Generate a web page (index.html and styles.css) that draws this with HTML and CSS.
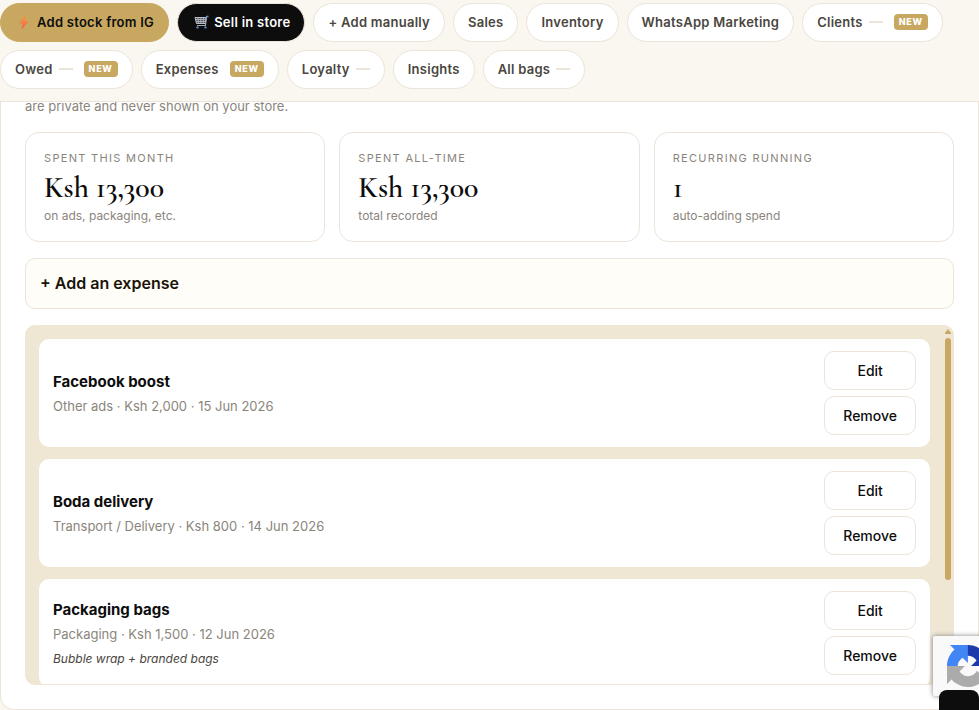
FILE: index.html
```html
<!DOCTYPE html>
<html lang="en">
<head>
  <meta charset="UTF-8" />
  <meta name="viewport" content="width=device-width, initial-scale=1" />
  <title>Expenses</title>
  <link rel="stylesheet" href="styles.css">
</head>
<body>
  <nav class="tabs">
    <button class="tab tab-gold" type="button">
      <svg class="tab-icon" viewBox="0 0 18 18" aria-hidden="true">
        <defs>
          <linearGradient id="bolt" x1="0" y1="0" x2="0" y2="1">
            <stop offset="0" stop-color="#f9983c"/>
            <stop offset="1" stop-color="#f4604f"/>
          </linearGradient>
        </defs>
        <path d="M11 3 5 10h3.500L7 15.500l6-7H9.500z" fill="url(#bolt)" stroke="url(#bolt)" stroke-width="1" stroke-linejoin="round"/>
      </svg>
      Add stock from IG
    </button>
    <button class="tab tab-dark" type="button">
      <svg class="tab-icon" viewBox="0 0 18 18" aria-hidden="true" fill="none">
        <path d="M3 4.500h11l-.6 6H4.500z" fill="#4b4f55" stroke="#b9bec6"/>
        <path d="M6 4.500l.5 6M8.800 4.500v6M11.500 4.500l-.3 6M3.500 6.500h10.300M4 8.500h9.600" stroke="#b9bec6" stroke-width=".8"/>
        <path d="M16 3.500h-1.400L13.400 12.500H5" stroke="#a3a9b2" stroke-width="1.200"/>
        <path d="M14.300 3.500h2.200" stroke="#4f8fe0" stroke-width="1.600"/>
        <circle cx="5.500" cy="14.400" r="1.200" fill="#5f82b8"/>
        <circle cx="13.500" cy="14.400" r="1.200" fill="#5f82b8"/>
      </svg>
      Sell in store
    </button>
    <button class="tab" type="button">+ Add manually</button>
    <button class="tab" type="button">Sales</button>
    <button class="tab" type="button">Inventory</button>
    <button class="tab" type="button">WhatsApp Marketing</button>
    <button class="tab" type="button">Clients <span class="dash"></span><span class="new">NEW</span></button>
    <button class="tab" type="button">Owed <span class="dash"></span><span class="new">NEW</span></button>
    <button class="tab" type="button">Expenses <span class="new">NEW</span></button>
    <button class="tab" type="button">Loyalty <span class="dash"></span></button>
    <button class="tab" type="button">Insights</button>
    <button class="tab" type="button">All bags <span class="dash"></span></button>
  </nav>

  <main class="panel">
    <p class="intro">are private and never shown on your store.</p>

    <section class="stats">
      <div class="stat">
        <div class="stat-label">Spent this month</div>
        <div class="stat-value">Ksh 13,300</div>
        <div class="stat-note">on ads, packaging, etc.</div>
      </div>
      <div class="stat">
        <div class="stat-label">Spent all-time</div>
        <div class="stat-value">Ksh 13,300</div>
        <div class="stat-note">total recorded</div>
      </div>
      <div class="stat">
        <div class="stat-label">Recurring running</div>
        <div class="stat-value">1</div>
        <div class="stat-note">auto-adding spend</div>
      </div>
    </section>

    <button class="add" type="button">+ Add an expense</button>

    <section class="list">
      <div class="items">
        <article class="item">
          <div class="item-text">
            <div class="item-title">Facebook boost</div>
            <div class="item-meta">Other ads · Ksh 2,000 · 15 Jun 2026</div>
          </div>
          <div class="item-actions">
            <button class="btn" type="button">Edit</button>
            <button class="btn" type="button">Remove</button>
          </div>
        </article>
        <article class="item">
          <div class="item-text">
            <div class="item-title">Boda delivery</div>
            <div class="item-meta">Transport / Delivery · Ksh 800 · 14 Jun 2026</div>
          </div>
          <div class="item-actions">
            <button class="btn" type="button">Edit</button>
            <button class="btn" type="button">Remove</button>
          </div>
        </article>
        <article class="item">
          <div class="item-text">
            <div class="item-title">Packaging bags</div>
            <div class="item-meta">Packaging · Ksh 1,500 · 12 Jun 2026</div>
            <div class="item-note">Bubble wrap + branded bags</div>
          </div>
          <div class="item-actions">
            <button class="btn" type="button">Edit</button>
            <button class="btn" type="button">Remove</button>
          </div>
        </article>
      </div>
      <div class="scrollbar" aria-hidden="true">
        <svg class="scroll-arrow" viewBox="0 0 6 5"><path d="M3 0 6 4v1H0V4z"/></svg>
        <div class="scroll-thumb"></div>
      </div>
    </section>
  </main>

  <div class="captcha">
    <svg class="captcha-logo" viewBox="0 0 64 64" aria-hidden="true">
      <path fill="#1c3aa9" d="M64 31.955l-.033-1.370V4.687l-7.160 7.160C50.948 4.674 42.033.093 32.050.093c-10.400 0-19.622 4.960-25.458 12.640l11.736 11.860a15.550 15.550 0 0 1 4.754-5.334c2.050-1.600 4.952-2.906 8.968-2.906.485 0 .860.057 1.135.163 4.976.393 9.288 3.140 11.828 7.124l-8.307 8.307L64 31.953"/>
      <path fill="#4285f4" d="M31.862.094l-1.370.033H4.594l7.160 7.160C4.580 13.147 0 22.060 0 32.046c0 10.400 4.960 19.622 12.640 25.458L24.500 45.768a15.550 15.550 0 0 1-5.334-4.754c-1.600-2.050-2.906-4.952-2.906-8.968 0-.485.057-.860.163-1.135.393-4.976 3.140-9.288 7.124-11.828l8.307 8.307L31.860.095"/>
      <path fill="#ababab" d="M.001 32.045l.033 1.370v25.898l7.160-7.160c5.860 7.173 14.774 11.754 24.760 11.754 10.400 0 19.622-4.960 25.458-12.640l-11.736-11.860a15.550 15.550 0 0 1-4.754 5.334c-2.050 1.600-4.952 2.906-8.968 2.906-.485 0-.860-.057-1.135-.163-4.976-.393-9.288-3.140-11.828-7.124l8.307-8.307c-10.522.040-22.400.066-27.295-.005"/>
    </svg>
  </div>
  <button class="float" type="button" aria-label="Open"></button>
</body>
</html>
```
FILE: styles.css
```css
* {
  box-sizing: border-box;
}
body {
  margin: 0;
  background: #faf6f0;
  font-family: Inter, sans-serif;
  font-size: 13px;
  color: #0d0d0d;
  overflow: hidden;
}
button {
  font-family: inherit;
  cursor: pointer;
}
.tabs {
  position: relative;
  z-index: 1;
  display: flex;
  flex-wrap: wrap;
  gap: 8px;
  padding: 3px 0 12px;
  background: #faf6f0;
  border-bottom: 1px solid #ece4d8;
}
.tab {
  display: flex;
  align-items: center;
  height: 39px;
  padding: 0 14px 2px;
  border: 1px solid #ece4d8;
  border-radius: 20px;
  background: #fff;
  color: #4a4640;
  font-size: 13px;
  font-weight: 600;
  letter-spacing: 0.02em;
}
.tab-gold {
  background: #c8a860;
  border-color: #c8a860;
  color: #0d0d0d;
}
.tab-dark {
  background: #0d0d0d;
  color: #fff;
}
.tab-icon {
  width: 18px;
  height: 18px;
  margin-right: 4px;
}
.dash {
  width: 14px;
  height: 2px;
  margin-left: 6px;
  background: #ece4d8;
}
.new {
  margin-left: 11px;
  padding: 0 5px;
  border-radius: 4px;
  background: #c8a860;
  color: #fff;
  font-size: 9px;
  font-weight: 800;
  line-height: 16px;
  letter-spacing: 0.08em;
}
.panel {
  padding: 0 24px 24px;
  border: 1px solid #ece4d8;
  border-top: 0;
  border-radius: 0 0 14px 14px;
  background: #fff;
}
.intro {
  margin: -6px 0 16px;
  font-size: 13px;
  line-height: 20px;
  color: #8a857c;
}
.stats {
  display: grid;
  grid-template-columns: repeat(3, 1fr);
  gap: 14px;
}
.stat {
  padding: 17px 18px 15px;
  border: 1px solid #ece4d8;
  border-radius: 14px;
}
.stat-label {
  font-size: 11px;
  line-height: 16px;
  letter-spacing: 0.12em;
  text-transform: uppercase;
  color: #8a857c;
}
.stat-value {
  margin-top: 4px;
  font-family: "Cormorant Garamond", "Liberation Serif", serif;
  font-size: 30px;
  font-weight: 600;
  line-height: 36px;
}
.stat-note {
  font-size: 12px;
  line-height: 20px;
  color: #8a857c;
}
.add {
  display: block;
  width: 100%;
  margin: 16px 0;
  padding: 0 14px;
  border: 1px solid #ece4d8;
  border-radius: 10px;
  background: #fffdf8;
  color: #1a1408;
  font-size: 16px;
  font-weight: 600;
  line-height: 49px;
  text-align: left;
}
.list {
  display: flex;
  max-height: 360px;
  overflow: hidden;
  border: 1px solid #efe6d4;
  border-radius: 10px;
  background: #efe6d4;
}
.items {
  flex: 1;
  display: flex;
  flex-direction: column;
  gap: 12px;
  padding: 13px 15px 13px 13px;
}
.item {
  display: flex;
  align-items: center;
  justify-content: space-between;
  flex-shrink: 0;
  padding: 12px 14px;
  border-radius: 10px;
  background: #fff;
}
.item-title {
  font-size: 15px;
  font-weight: 700;
  line-height: 26px;
}
.item-meta {
  font-size: 13px;
  line-height: 22px;
  color: #8a857c;
}
.item-note {
  margin-top: 4px;
  font-size: 12px;
  font-style: italic;
  line-height: 20px;
  color: #4a4640;
}
.item-actions {
  display: flex;
  flex-direction: column;
  gap: 6px;
}
.btn {
  height: 39px;
  padding: 0 18px;
  border: 1px solid #ece4d8;
  border-radius: 10px;
  background: #fff;
  color: #0d0d0d;
  font-size: 14px;
  font-weight: 500;
}
.scrollbar {
  padding: 3px 2px 0 0;
}
.scroll-arrow {
  display: block;
  width: 6px;
  height: 5px;
  margin-bottom: 4px;
  fill: #c8a860;
}
.scroll-thumb {
  width: 6px;
  height: 242px;
  border-radius: 3px;
  background: #c8a860;
}
.captcha {
  position: fixed;
  right: -24px;
  bottom: 14px;
  z-index: 2;
  width: 70px;
  height: 60px;
  padding: 9px 14px;
  border-radius: 2px;
  background: #f9f9f9;
  box-shadow: 0 0 5px gray;
}
.captcha-logo {
  display: block;
  width: 42px;
  height: 42px;
}
.float {
  position: fixed;
  right: 0;
  bottom: -20px;
  z-index: 3;
  width: 40px;
  height: 40px;
  border: 0;
  border-radius: 8px;
  background: #0d0d0d;
}
```
